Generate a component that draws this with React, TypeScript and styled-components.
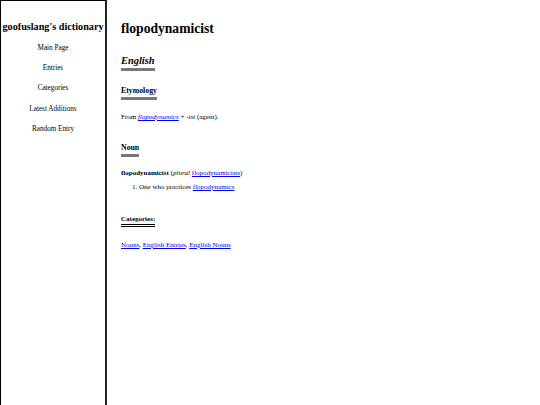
import React from 'react';
import styled, { createGlobalStyle } from 'styled-components';

const GlobalStyle = createGlobalStyle`
  html, body {
    margin: 0;
    padding: 0;
    background: #fff;
    color: #000;
    font-family: "Liberation Serif", "Times New Roman", serif;
  }
`;

const Page = styled.div`
  display: flex;
  min-height: 405px;
`;

const Sidebar = styled.nav`
  width: 104px;
  flex-shrink: 0;
  border-top: 1px solid #000;
  border-left: 1px solid #000;
  border-right: 2px solid #222;
  text-align: center;
  padding-top: 20px;
`;

const SiteTitle = styled.div`
  font-size: 10.2px;
  font-weight: bold;
  margin-bottom: 12px;
`;

const NavList = styled.div`
  display: flex;
  flex-direction: column;
  gap: 12.2px;
`;

const NavItem = styled.a`
  font-size: 7.2px;
  line-height: 8px;
  color: #000;
  text-decoration: none;
`;

const Main = styled.main`
  flex: 1;
  padding: 21px 14px 0;
`;

const Title = styled.h1`
  font-size: 13.6px;
  font-weight: bold;
  margin: 0 0 13px;
`;

const Heading = styled.h2<{ $size: number; $italic?: boolean }>`
  display: inline-block;
  font-size: ${(p) => p.$size}px;
  font-style: ${(p) => (p.$italic ? 'italic' : 'normal')};
  font-weight: bold;
  margin: 0;
  padding-bottom: 2px;
  border-bottom: 3px solid #777;
`;

const Section = styled.section<{ $gap: number }>`
  margin-bottom: ${(p) => p.$gap}px;
`;

const Text = styled.p<{ $top: number }>`
  font-size: 7px;
  margin: ${(p) => p.$top}px 0 0;
`;

const Link = styled.a`
  color: #0000ee;
  text-decoration: underline;
`;

const Senses = styled.ol`
  font-size: 7px;
  margin: 6px 0 0;
  padding-left: 18px;
`;

const CatHeading = styled.h3`
  display: inline-block;
  font-size: 7px;
  font-weight: bold;
  margin: 0;
  padding-bottom: 1px;
  border-bottom: 3px double #000;
`;

export default function App() {
  return (
    <>
      <GlobalStyle />
      <Page>
        <Sidebar>
          <SiteTitle>goofuslang's dictionary</SiteTitle>
          <NavList>
            <NavItem>Main Page</NavItem>
            <NavItem>Entries</NavItem>
            <NavItem>Categories</NavItem>
            <NavItem>Latest Additions</NavItem>
            <NavItem>Random Entry</NavItem>
          </NavList>
        </Sidebar>
        <Main>
          <Title>flopodynamicist</Title>
          <Section $gap={8}>
            <Heading $size={10.4} $italic>English</Heading>
          </Section>
          <Section $gap={15}>
            <Heading $size={7.8}>Etymology</Heading>
            <Text $top={13}>
              From <Link><i>flopodynamics</i></Link> + <i>-ist</i> (agent).
            </Text>
          </Section>
          <Section $gap={16}>
            <Heading $size={7.8}>Noun</Heading>
            <Text $top={12}>
              <b>flopodynamicist</b> (<i>plural</i> <Link>flopodynamicists</Link>)
            </Text>
            <Senses>
              <li>
                One who practices <Link>flopodynamics</Link>
              </li>
            </Senses>
          </Section>
          <Section $gap={0}>
            <CatHeading>Categories:</CatHeading>
            <Text $top={14}>
              <Link>Nouns</Link>, <Link>English Entries</Link>, <Link>English Nouns</Link>
            </Text>
          </Section>
        </Main>
      </Page>
    </>
  );
}
